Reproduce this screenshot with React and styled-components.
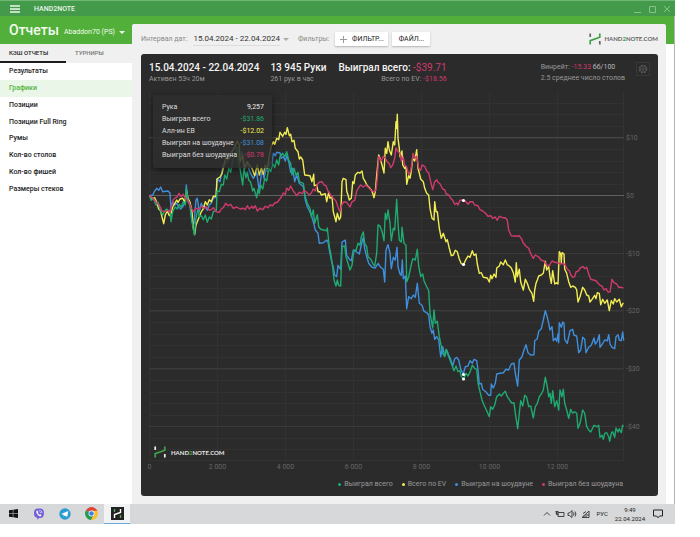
import React from "react";
import styled, { createGlobalStyle } from "styled-components";

const color = {
  green: "#1faa70",
  yellow: "#f1ed52",
  blue: "#3f8fdc",
  pink: "#cf3a6d",
  panel: "#2b2b2b",
  brand: "#52b03a",
};

const Global = createGlobalStyle`
  * { box-sizing: border-box; }
  body { margin: 0; background: #fff; font-family: Roboto, "Noto Sans", sans-serif; font-size: 8px; line-height: 12px; color: #222; }
  button, select { font: inherit; color: inherit; margin: 0; padding: 0; border: 0; background: none; }
  a { color: inherit; text-decoration: none; }
  h1, h2, p, ul, dl, dd { margin: 0; padding: 0; font: inherit; list-style: none; }
  svg { display: block; flex: none; }
`;

const Desktop = styled.div`
  margin-right: 25px;
`;

const TitleBar = styled.header`
  display: flex;
  align-items: center;
  height: 16px;
  padding: 0 4px 0 10px;
  background: #439a4b;
  border-top: 1px solid #6fb573;
  color: #eaf6ea;
`;

const IconButton = styled.button`
  display: flex;
  align-items: center;
  justify-content: center;
`;

const AppName = styled.span`
  margin-left: 14px;
  flex: 1;
  font-size: 7px;
  font-weight: 500;
`;

const WindowButtons = styled.div`
  display: flex;
  gap: 7px;
  color: #83c386;
`;

const Body = styled.div`
  display: flex;
  background: linear-gradient(${color.brand} 28px, #fff 28px);
  border-right: 1px solid #b4b4b4;
`;

const Sidebar = styled.aside`
  width: 132px;
  flex: none;
`;

const SidebarHead = styled.div`
  display: flex;
  align-items: center;
  height: 28px;
  padding: 0 7px 0 9px;
  color: #f2fbef;
`;

const PageTitle = styled.h1`
  font-size: 14px;
  line-height: 20px;
  font-weight: 500;
  flex: 1;
`;

const Account = styled.button`
  display: flex;
  align-items: center;
  gap: 4px;
  padding-top: 4px;
  font-size: 7px;
  white-space: nowrap;
`;

const Caret = styled.span`
  border: solid transparent;
  border-width: 3px 3px 0;
  border-top-color: currentColor;
`;

const Tabs = styled.div`
  display: flex;
  height: 19px;
  background: #f0f0f0;
`;

const Tab = styled.button`
  flex: 1;
  text-align: left;
  padding-left: 9px;
  font-size: 6px;
  font-weight: 500;
  color: ${(p) => (p.$active ? "#222" : "#777")};
  border-bottom: 2px solid ${(p) => (p.$active ? "#1c1c1c" : "transparent")};
`;

const Menu = styled.ul`
  display: grid;
  grid-template-rows: repeat(8, 1fr);
  height: 134px;
`;

const MenuLink = styled.a`
  display: flex;
  align-items: center;
  height: 100%;
  padding-left: 9px;
  font-size: 7px;
  font-weight: 500;
  color: ${(p) => (p.$active ? "#56b33e" : "#222")};
  background: ${(p) => (p.$active ? "#e9f6e8" : "transparent")};
`;

const Main = styled.main`
  flex: 1;
  min-width: 0;
  margin: 8px 8px 0 0;
  padding: 0 8px 8px 9px;
  background: #f0f0f0;
  border-radius: 2px 2px 0 0;
`;

const Toolbar = styled.div`
  display: flex;
  align-items: center;
  height: 30px;
`;

const ToolLabel = styled.span`
  color: #888;
  font-size: 7px;
  margin-right: 6px;
`;

const DateButton = styled.button`
  display: flex;
  align-items: center;
  gap: 3px;
  margin-right: 9px;
  color: #aaa;
`;

const DateText = styled.span`
  color: #333;
  border-bottom: 1px solid #ddd;
`;

const Chip = styled.button`
  display: flex;
  align-items: center;
  justify-content: center;
  gap: 5px;
  width: ${(p) => (p.$wide ? "53px" : "38px")};
  height: 14px;
  margin-right: 4px;
  background: #fff;
  border-radius: 1px;
  box-shadow: 0 1px 2px rgba(0, 0, 0, 0.25);
  font-size: 7px;
`;

const BrandLink = styled.a`
  display: flex;
  align-items: center;
  gap: 3px;
  margin-left: auto;
  font-family: Lato, sans-serif;
  font-size: 6px;
  font-weight: 700;
  color: #666;
`;

const Accent = styled.span`
  color: #3fa24a;
`;

const Card = styled.section`
  background: ${color.panel};
  border-radius: 3px;
  color: #999;
  position: relative;
`;

const Stats = styled.div`
  display: flex;
  align-items: flex-start;
  height: 32px;
  padding: 8px 8px 0;
`;

const Stat = styled.div`
  margin-right: ${(p) => p.$gap || "0"};
  text-align: ${(p) => p.$align || "left"};
`;

const Big = styled.h2`
  font-size: 10px;
  font-weight: 500;
  line-height: 12px;
  color: #f4f4f4;
`;

const Small = styled.p`
  line-height: 11px;
  font-size: 7px;
`;

const Loss = styled.span`
  color: ${color.pink};
  font-weight: 400;
`;

const Bright = styled.span`
  color: #bbb;
`;

const Gear = styled(IconButton)`
  width: 14px;
  height: 14px;
  border: 1px solid #383838;
  color: #555;
`;

const Plot = styled.svg`
  width: 100%;
  height: auto;
`;

const Tooltip = styled.dl`
  position: absolute;
  left: 12px;
  top: 41px;
  width: 119px;
  height: 73px;
  padding: 6px 8px 6px 9px;
  background: rgba(46, 46, 46, 0.85);
  border-radius: 3px;
  box-shadow: 0 2px 6px rgba(0, 0, 0, 0.5);
  font-size: 7px;
  color: #ddd;
`;

const TipRow = styled.div`
  display: flex;
  justify-content: space-between;
`;

const TipValue = styled.dd`
  color: ${(p) => p.$tone};
`;

const Legend = styled.ul`
  display: flex;
  justify-content: flex-end;
  gap: 9px;
  height: 20px;
  padding: 2px 35px 0 0;
  font-size: 7px;
`;

const LegendItem = styled.li`
  display: flex;
  align-items: center;
  height: 12px;
  gap: 3px;
  &::before {
    content: "";
    width: 3px;
    height: 3px;
    border-radius: 50%;
    background: ${(p) => p.$tone};
  }
`;

const Taskbar = styled.footer`
  display: flex;
  align-items: center;
  height: 20px;
  background: #d7d8d9;
  color: #222;
`;

const TaskButton = styled(IconButton)`
  width: 26px;
  height: 20px;
  background: ${(p) => (p.$active ? "#f1f2f3" : "transparent")};
  border-bottom: 1px solid ${(p) => (p.$active ? "#6aa9d8" : "transparent")};
`;

const Tray = styled.div`
  display: flex;
  align-items: center;
  gap: 5px;
  margin-left: auto;
  padding-right: 12px;
  font-size: 6px;
`;

const Clock = styled.time`
  text-align: center;
  line-height: 9px;
  margin: 0 3px 0 2px;
`;

/* Each series is a list of runs: an origin in chart units, then points in thirds of a unit. */
const series = [
  {
    tone: color.blue,
    runs: [
      [140, 85, "28,332 38,330 44,318 50,310 56,316 62,306 68,320 84,318 90,324 93,370 98,350 104,360 110,355 116,366 122,372 130,362 136,350 139,300 144,350 150,360 156,412 162,415 168,345 172,340 178,380 184,355 190,370 196,365 202,376 208,360 214,355 220,340 229,336 231,282 240,290 250,240 262,230 274,200 290,185 300,215 306,200 312,250 320,232 330,262 340,280 350,262 358,318 366,250 372,280 378,250 384,262 390,230 396,236 400,205 406,212 410,202 420,204 424,220 430,215 436,228 440,212 446,230 452,262 458,250 464,290 470,270 478,295"],
      [290, 180, "40,20 46,60 52,80 58,92 64,105 70,125 76,150 84,160 88,190 100,188 110,180 114,186 118,210 124,240 130,262 134,286 140,290 144,256 152,268 156,186 166,180 170,226 180,240 184,242 190,210 200,216 208,222 214,195 220,172 224,206 230,230 236,250 246,262 256,264 264,250 272,262 280,268 284,306 288,210 294,194 300,220 304,266 310,232 316,240 321,202 324,260 330,282 334,286 337,240 340,296 346,288 350,386 356,350 364,356 370,345 376,352 382,310 388,370 396,376 402,394 410,398 416,405 420,440 426,460 430,450 434,478"],
      [400, 240, "110,290 116,300 122,350 128,320 134,348 140,330 146,345 152,358 158,378 164,356 170,352 176,360 182,388 190,402 196,380 204,378 210,362 217,370 222,358 230,362 234,390 238,432 244,430 248,448 258,456 266,466 272,466 274,432 280,444 286,430 290,402 300,400 310,398 318,388 326,390 334,372 342,370 346,400 353,438 358,360 366,350 372,330 378,314 384,338 392,345 402,344 404,302 412,296 416,274 424,266 430,240 436,212 442,232 446,250 450,270 456,260 460,302 466,295 470,304 474,282 476,308"],
      [520, 300, "118,68 124,82 128,66 132,70 134,118 142,130 150,92 158,88 162,106 170,108 176,158 182,150 188,112 194,118 198,158 206,142 214,136 222,114 226,132 232,124 238,104 240,142 248,130 254,120 262,122 266,104 270,132 276,142 284,146 288,110 294,104 298,120 304,122 308,96 311,122"],
    ],
  },
  {
    tone: color.yellow,
    runs: [
      [140, 85, "28,332 36,340 44,338 50,352 56,372 62,378 66,396 71,416 76,390 82,378 88,392 94,384 98,366 104,356 110,345 114,352 120,342 128,340 134,352 140,320 144,340 150,352 156,380 160,430 164,448 168,420 176,400 184,380 190,372 196,350 202,360 208,344 214,350 220,334 228,334 231,282 240,276 246,266 252,240 258,216 266,222 272,215 276,200 284,186 292,168 298,180 300,230 308,210 314,250 322,230 328,240 336,250 344,272 352,240 358,270 364,250 370,268 376,240 382,250 388,212 394,182 400,170 404,178 410,160 416,164 420,142 428,154 434,142 438,148 442,128 448,152 452,148 456,170 462,166 466,190 474,200 478,222"],
      [300, 85, "2,216 8,225 14,270 30,272 36,290 41,268 43,302 50,300 54,320 60,320 64,330 76,326 80,350 86,322 90,340 96,335 100,380 104,395 108,410 112,385 118,404 122,395 126,290 130,280 138,284 140,318 144,330 148,345 154,340 158,290 162,296 166,270 174,262 180,264 186,258 190,280 196,290 202,302 210,310 216,318 222,338 226,320 230,270 236,210 242,225 246,240 252,264 256,190 260,205 264,170 268,195 274,210 280,170 284,180 288,110 290,130 292,88 294,160 298,190 300,215 306,198 308,240 314,250 318,244 320,298 326,272 330,280 334,258 338,220 344,228 350,194 354,250 358,265 362,282 370,290 374,310 380,325 386,330 390,370 396,400 402,405 404,350 408,380 412,380 418,430 424,460 430,445 438,470 442,464 448,490"],
      [440, 185, "34,212 40,210 46,196 52,200 58,222 64,236 70,238"],
      [400, 240, "191,73 198,58 204,48 210,52 217,32 222,46 228,42 232,72 238,100 244,98 250,112 262,114 268,126 272,106 276,116 282,102 288,112 290,84 298,78 302,66 310,74 316,60 322,74 328,78 334,84 340,98 346,126 349,68 352,110 358,88 362,126 370,150 376,118 382,130 388,148 396,160 401,184 404,150 408,130 412,120 416,108 424,105 430,100 436,64 440,90 446,80 450,110 454,130 458,92 464,132 470,128 474,132 478,35"],
      [520, 180, "122,222 124,248 126,218 132,222 134,268 140,280 146,305 152,322 158,318 166,322 170,330 174,366 180,350 188,322 194,330 200,345 206,348 210,366 216,358 224,346 228,356 232,338 238,340 242,374 248,358 254,370 262,360 268,392 274,362 280,372 284,356 290,366 298,358 304,380 310,368"],
    ],
  },
  {
    tone: color.green,
    runs: [
      [140, 85, "28,332 34,346 40,340 48,360 54,352 60,374 68,390 74,378 80,372 86,378 90,376 93,410 98,380 106,366 112,372 118,358 124,366 130,350 136,360 139,310 144,345 150,360 156,410 163,450 168,400 174,370 178,395 184,392 190,404 196,390 202,412 208,396 214,402 220,380 229,376 231,318 238,320 244,298 250,300 254,270 260,282 266,250 272,262 278,225 286,210 292,190 296,235 300,250 304,275 308,300 312,250 318,278 322,262 326,285 332,292 338,318 342,310 346,325 350,338 354,312 358,326 362,300 368,312 374,280 380,288 386,250 392,260 398,236 404,248 410,225 416,240 420,215 428,205 434,215 440,200 446,225 452,235 456,270 462,250 468,270 474,262 478,290"],
      [290, 180, "40,10 46,50 52,70 60,85 64,110 70,90 74,130 82,104 86,140 92,148 110,152 112,144 118,200 122,220 128,262 132,300 138,318 142,300 146,316 152,318 156,200 164,198 168,230 174,250 180,270 186,256 192,210 198,212 204,190 210,196 214,170 220,156 224,190 230,200 234,230 242,238 248,250 254,258 260,220 264,135 270,138 276,155 282,182 286,100 290,118 294,90 300,130 304,182 310,145 314,150 320,58 324,130 328,180 334,186 336,142 342,190 348,196 350,306 356,290 362,262 368,236 376,240 382,208 386,260 392,290 398,282 402,302 410,320 416,332 420,400 428,444 432,390 436,430 442,424 448,470"],
      [400, 240, "122,310 128,340 134,350 138,328 144,345 150,360 156,376 162,392 168,378 174,395 180,392 184,410 191,416 198,400 204,408 210,396 217,376 224,385 230,388 234,430 240,455 246,480 252,495 260,512 268,530 272,500 278,508 284,495 290,470 298,462 304,468 310,460 316,454 322,470 330,482 336,490 342,488 346,520 353,566 358,520 362,482 368,498 374,466 380,472 386,500 392,498 400,534 406,500 412,490 418,470 424,462 430,450 436,412 442,440 446,470 450,460 454,490 458,452 464,500 470,482 476,510"],
      [520, 300, "120,270 126,290 130,268 134,310 140,330 146,355 152,328 158,340 164,335 170,340 174,385 180,370 188,330 194,340 200,380 206,390 212,396 218,384 222,376 230,380 236,376 240,412 246,406 250,418 254,400 260,398 266,410 269,424 274,400 278,395 284,412 288,384 294,396 298,386 304,398 308,376 310,380"],
    ],
  },
  {
    tone: color.pink,
    runs: [
      [140, 85, "28,332 40,340 48,352 58,360 66,378 74,380 84,376 90,382 96,360 100,344 106,338 112,336 117,325 123,335 130,328 136,340 146,350 152,366 160,380 168,370 178,372 184,364 192,370 200,366 208,376 214,374 220,368 228,380 238,382 244,372 250,368 257,355 264,362 272,358 280,370 290,366 300,372 310,370 316,374 322,362 328,372 336,364 340,370 346,362 352,378 360,370 368,374 376,364 384,368 390,360 398,362 404,354 412,352 418,344 424,336 430,324 436,328 440,310 446,316 452,303 460,318 466,326 470,332 478,322 486,326 492,316 500,322 508,330 514,324 520,312 526,318 532,298 538,292"],
      [300, 85, "66,290 72,300 78,302 84,318 92,330 100,340 108,348 114,366 120,380 126,358 132,350 140,352 150,366 156,350 164,346 170,318 176,308 182,300 190,306 198,300 206,308 214,316 222,322 228,314 232,280 236,215 244,228 250,214 256,220 262,230 268,236 272,248 278,240 284,220 288,188 294,200 300,205 304,228 310,216 314,240 320,246 326,268 332,258 336,232 339,205 344,220 350,214 356,250 362,256 366,240 374,244 380,258 386,264 392,290 398,314 404,290 410,284 414,292 420,296 428,312 434,314 438,326 446,330 452,340 458,346 464,358 470,354 474,360 480,346"],
      [440, 185, "70,45 78,50 84,58 90,50 98,50 104,60 114,62 120,74 128,78 136,84 144,94 152,92 158,100 166,96 172,106 178,94 188,98 196,98 202,106 206,136 214,152 230,154 238,152 246,164 250,174 258,184 266,190 272,206 280,220 286,210 296,216 304,226 312,228 320,240 328,242 336,228 344,232 354,234"],
      [520, 180, "122,252 130,250 136,256 142,268 148,272 152,284 158,292 164,290 168,276 176,272 180,264 190,260 194,266 200,262 206,282 212,298 220,300 228,302 234,310 240,316 246,318 252,330 258,326 264,336 270,336 276,298 282,308 290,312 296,322 304,322 310,324"],
    ],
  },
];

const toPoints = (runs) =>
  runs
    .flatMap(([ox, oy, pts]) =>
      pts.split(" ").map((pair) => {
        const [x, y] = pair.split(",").map(Number);
        return `${(ox + x / 3).toFixed(1)},${(oy + y / 3).toFixed(1)}`;
      })
    )
    .join(" ");

const levels = [["$10", 137.5], ["$0", 195.5], ["-$10", 253.5], ["-$20", 310.5], ["-$30", 368.5], ["-$40", 426.5]];
const hands = [["0", 149.5], ["2 000", 217.5], ["4 000", 285.5], ["6 000", 353.5], ["8 000", 421.5], ["10 000", 489.5], ["12 000", 557.5]];
const minor = Array.from({ length: 32 }, (_, i) => Math.round(102.9 + i * 11.55) + 0.5);
const markers = [[463.5, 200.5], [463.5, 264.5], [463.5, 374.5], [463.5, 379]];

function Mark({ size = 12, tone = "#666" }) {
  return (
    <svg width={size} height={size} viewBox="0 0 12 12" fill="none" strokeWidth="1.7">
      <path d="M1.2 0.5V4M10.8 8v3.5" stroke={tone} />
      <path d="M1.2 11.5V7.6L10.8 4.2V0.5" stroke="#3fa24a" />
    </svg>
  );
}

function Chart() {
  return (
    <Plot viewBox="141 86 517 390" role="img" aria-label="График выигрыша">
      <g stroke="#323232" fill="none">
        {minor.filter((y) => y < 460).map((y) => <path key={y} d={`M149 ${y}H624`} />)}
        {hands.map(([t, x]) => <path key={t} d={`M${x} 92V461`} />)}
        <path d="M623.5 92V461M149 460.5H624" />
        {levels.map(([t, y]) => (
          <path key={t} d={`M149 ${y}H624`} stroke={t === "$0" ? "#606060" : t === "$10" ? "#484848" : "#3a3a3a"} />
        ))}
      </g>
      <g fill="none" strokeWidth="1.4" strokeLinejoin="round">
        {series.map((s) => <polyline key={s.tone} points={toPoints(s.runs)} stroke={s.tone} />)}
      </g>
      {markers.map(([x, y]) => <circle key={y} cx={x} cy={y} r="1.6" fill="#fff" />)}
      <g fill="#666" fontSize="7">
        {levels.map(([t, y]) => <text key={t} x="626" y={y + 2.5}>{t}</text>)}
        {hands.map(([t, x]) => <text key={t} x={x} y="469" textAnchor="middle">{t}</text>)}
      </g>
      <svg x="154" y="446" width="12" height="12" viewBox="0 0 12 12" fill="none" strokeWidth="1.7">
        <path d="M1.2 0.5V4M10.8 8v3.5" stroke="#eee" />
        <path d="M1.2 11.5V7.6L10.8 4.2V0.5" stroke="#3fa24a" />
      </svg>
      <text x="171" y="455" fontFamily="Lato" fontWeight="700" fontSize="6" fill="#e6e6e6">
        HAND<tspan fill="#3fa24a">2</tspan>NOTE.COM
      </text>
    </Plot>
  );
}

const menu = ["Результаты", "Графики", "Позиции", "Позиции Full Ring", "Румы", "Кол-во столов", "Кол-во фишей", "Размеры стеков"];

const tips = [
  ["Рука", "9,257", "#eee"],
  ["Выиграл всего", "-$31.86", color.green],
  ["Алл-ин EB", "-$12.02", color.yellow],
  ["Выиграл на шоудауне", "-$31.08", color.blue],
  ["Выиграл без шоудауна", "-$0.78", color.pink],
];

const legend = [
  ["Выиграл всего", color.green],
  ["Всего по EV", color.yellow],
  ["Выиграл на шоудауне", color.blue],
  ["Выиграл без шоудауна", color.pink],
];

function GearIcon() {
  return (
    <svg width="10" height="10" viewBox="0 0 10 10" fill="none" stroke="currentColor">
      <circle cx="5" cy="5" r="3.8" strokeWidth="1.2" strokeDasharray="2 1" />
      <circle cx="5" cy="5" r="3" strokeWidth="0.8" />
      <circle cx="5" cy="5" r="1.2" strokeWidth="0.9" />
    </svg>
  );
}

function TaskIcons() {
  return (
    <>
      <TaskButton aria-label="Пуск">
        <svg width="9" height="9" viewBox="0 0 9 9" fill="#111">
          <path d="M0 1.3 3.8.8V4.2H0zM4.3.7 9 0v4.2H4.3zM0 4.7h3.8v3.5L0 7.7zM4.3 4.7H9V9l-4.7-.7z" />
        </svg>
      </TaskButton>
      <TaskButton aria-label="Viber">
        <svg width="12" height="12" viewBox="0 0 12 12">
          <path d="M6 .5c3.6 0 5 1.4 5 4.7S9.6 10 6.2 10L4.2 11.8V9.8C1.800 9.3 1 8 1 5.2 1 1.9 2.4.5 6 .5z" fill="#7560d8" />
          <path d="M3.7 2.7c-.8.6-.5 1.7.5 3.2 1 1.4 2.4 2.5 3.4 2.3.7-.2 1-.8.7-1.2l-1-.7-.8.5C5.6 6.3 5 5.5 4.8 4.8l.5-.7-.7-1.2c-.2-.3-.6-.4-.9-.2z" fill="#fff" />
          <path d="M6.2 2.3c1.8 0 2.8 1 2.8 2.9M6.3 3.7c.9.1 1.3.6 1.3 1.4" fill="none" stroke="#fff" strokeWidth=".6" />
        </svg>
      </TaskButton>
      <TaskButton aria-label="Telegram">
        <svg width="12" height="12" viewBox="0 0 12 12">
          <circle cx="6" cy="6" r="5.7" fill="#2a9bd3" />
          <path d="M2.2 5.9 9.3 3 8.2 9 5.9 7.5 4.8 8.6 4.6 6.8z" fill="#fff" />
        </svg>
      </TaskButton>
      <TaskButton aria-label="Chrome">
        <svg width="13" height="13" viewBox="0 0 14 14">
          <path d="M7 7 1 3.5A7 7 0 0 1 13 3.5L13.2 4z" fill="#db4437" />
          <path d="M7 7 1 3.5A7 7 0 0 0 6.5 14L9.6 8.5z" fill="#259b52" />
          <path d="M7 4h6.3A7 7 0 0 1 6.5 14l3.1-5.5z" fill="#fbc02d" />
          <circle cx="7" cy="7" r="3.2" fill="#fff" />
          <circle cx="7" cy="7" r="2.5" fill="#3d7fe6" />
        </svg>
      </TaskButton>
      <TaskButton $active aria-label="Hand2Note">
        <svg width="13" height="13" viewBox="0 0 13 13" fill="none" strokeWidth="1.4">
          <path d="M0 0h13v13H0z" fill="#222" />
          <path d="M3.5 2v3M9.5 8v3" stroke="#58a650" />
          <path d="M3.5 11V7.6L9.5 5.4V2" stroke="#fff" />
        </svg>
      </TaskButton>
    </>
  );
}

function TrayIcons() {
  return (
    <svg width="48" height="10" viewBox="0 0 48 10" fill="none" stroke="#333" strokeWidth=".9">
      <path d="M1 6.5 4 3.5l3 3" />
      <path d="M15 3.5h6v4h-6zM12.5 2.5h3M13.5 2.5v3h2M12.5 4h3" />
      <path d="M25 4v2.5h1.5L29 8.5V1.5L26.5 4zM30.5 3.5q1 1.5 0 3M32 2.5q1.8 2.5 0 5" />
      <path d="M39 8.5 46 2v6.5zM41 8.5V6.5M43 8.5V5M40 4.5l3-2M44 6h2" />
    </svg>
  );
}

export default function App() {
  return (
    <Desktop>
      <Global />
      <TitleBar>
        <IconButton aria-label="Меню">
          <svg width="10" height="8" viewBox="0 0 10 8" stroke="#eef8ee" strokeWidth="1.3">
            <path d="M0 1h10M0 4h10M0 7h10" />
          </svg>
        </IconButton>
        <AppName>HAND2NOTE</AppName>
        <WindowButtons>
          <IconButton aria-label="Свернуть"><svg width="8" height="8" stroke="currentColor"><path d="M1 7.5h7" /></svg></IconButton>
          <IconButton aria-label="Развернуть"><svg width="8" height="8" fill="none" stroke="currentColor"><path d="M1.5 1.5h6v6h-6z" /></svg></IconButton>
          <IconButton aria-label="Закрыть"><svg width="8" height="8" stroke="currentColor"><path d="M1 1l6 6M7 1 1 7" /></svg></IconButton>
        </WindowButtons>
      </TitleBar>
      <Body>
        <Sidebar>
          <SidebarHead>
            <PageTitle>Отчеты</PageTitle>
            <Account>Abaddon70 (PS) <Caret /></Account>
          </SidebarHead>
          <Tabs role="tablist">
            <Tab role="tab" aria-selected="true" $active>КЭШ ОТЧЕТЫ</Tab>
            <Tab role="tab" aria-selected="false">ТУРНИРЫ</Tab>
          </Tabs>
          <nav>
            <Menu>
              {menu.map((m) => (
                <li key={m}><MenuLink href="#" $active={m === "Графики"}>{m}</MenuLink></li>
              ))}
            </Menu>
          </nav>
        </Sidebar>
        <Main>
          <Toolbar>
            <ToolLabel>Интервал дат:</ToolLabel>
            <DateButton><DateText>15.04.2024 - 22.04.2024</DateText><Caret /></DateButton>
            <ToolLabel>Фильтры:</ToolLabel>
            <Chip $wide>
              <svg width="7" height="7" stroke="#999"><path d="M0 3.5h7M3.5 0v7" /></svg>
              ФИЛЬТР...
            </Chip>
            <Chip>ФАЙЛ...</Chip>
            <BrandLink href="#"><Mark /><span>HAND<Accent>2</Accent>NOTE.COM</span></BrandLink>
          </Toolbar>
          <Card>
            <Stats>
              <Stat $gap="11px">
                <Big>15.04.2024 - 22.04.2024</Big>
                <Small>Активен 53ч 20м</Small>
              </Stat>
              <Stat $gap="12px">
                <Big>13 945 Руки</Big>
                <Small>261 рук в час</Small>
              </Stat>
              <Stat $align="right" $gap="auto">
                <Big>Выиграл всего: <Loss>-$39.71</Loss></Big>
                <Small>Всего по EV: <Loss>-$18.56</Loss></Small>
              </Stat>
              <Stat $gap="11px">
                <Small>Винрейт: <Loss>-15.33</Loss> <Bright>бб/100</Bright></Small>
                <Small>2.5 среднее число столов</Small>
              </Stat>
              <Gear aria-label="Настройки"><GearIcon /></Gear>
            </Stats>
            <Chart />
            <Tooltip>
              {tips.map(([k, v, tone]) => (
                <TipRow key={k}><dt>{k}</dt><TipValue $tone={tone}>{v}</TipValue></TipRow>
              ))}
            </Tooltip>
            <Legend>
              {legend.map(([t, tone]) => <LegendItem key={t} $tone={tone}>{t}</LegendItem>)}
            </Legend>
          </Card>
        </Main>
      </Body>
      <Taskbar>
        <TaskIcons />
        <Tray>
          <TrayIcons />
          <span>РУС</span>
          <Clock>9:49<br />22.04.2024</Clock>
          <svg width="10" height="10" viewBox="0 0 10 10" fill="none" stroke="#222">
            <path d="M.5 1h9v6H6.5L5 8.8 3.5 7h-3z" />
          </svg>
        </Tray>
      </Taskbar>
    </Desktop>
  );
}
